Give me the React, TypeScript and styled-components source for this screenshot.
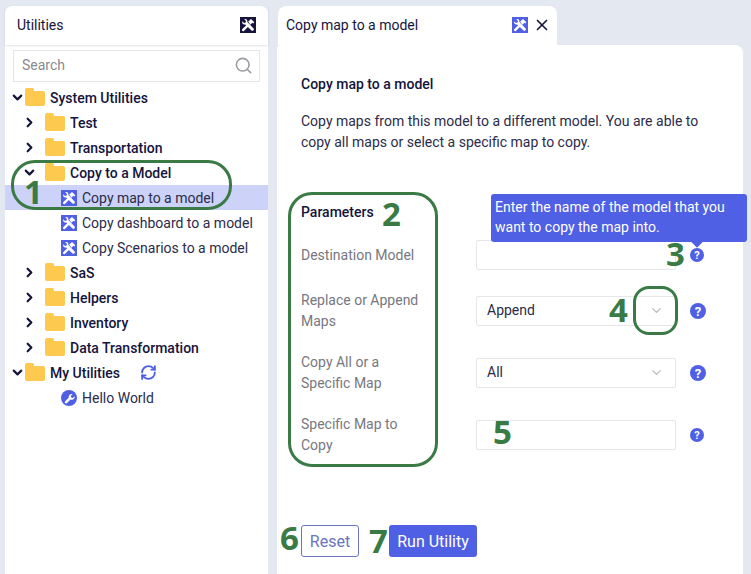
import * as React from "react";
import styled, { createGlobalStyle } from "styled-components";
import { ChevronDown, ChevronRight, RefreshCw, Search, X } from "lucide-react";

const Colors = {
    page: "#e4e8f1",
    navy: "#14143c",
    text: "#2b2b4a",
    grey: "#77777f",
    border: "#e4e6ea",
    indigo: "#5060e4",
    selected: "#cdd3f8",
    folder: "#fdc94f",
    green: "#3a7a44"
};

const GlobalStyle = createGlobalStyle`
    html, body {
        margin: 0;
        padding: 0;
        background: ${Colors.page};
    }
    body {
        font-family: Roboto, "Liberation Sans", sans-serif;
        color: ${Colors.navy};
    }
`;

const Page = styled.div`
    width: 751px;
    height: 574px;
    position: relative;
    overflow: hidden;
    display: flex;
    gap: 9px;
    padding: 6px 8px 0 5px;
    box-sizing: border-box;
`;

const LeftPanel = styled.div`
    width: 263px;
    flex-shrink: 0;
    background: #fff;
    border-radius: 8px 8px 0 0;
    display: flex;
    flex-direction: column;
`;

const PanelHeader = styled.div`
    height: 39px;
    flex-shrink: 0;
    display: flex;
    align-items: center;
    justify-content: space-between;
    padding: 0 12px 1px;
    box-sizing: border-box;
    font-size: 14px;
    box-shadow: 0 1px 2px rgba(40, 50, 90, 0.14);
`;

const SearchBox = styled.div`
    height: 32px;
    margin: 5px 8px 0;
    border: 1px solid ${Colors.border};
    box-sizing: border-box;
    display: flex;
    align-items: center;
    justify-content: space-between;
    padding: 0 6px 2px 8px;
    font-size: 14px;
    color: #8a8a92;
`;

const Tree = styled.div`
    margin-top: 3px;
    display: flex;
    flex-direction: column;
`;

const TreeRow = styled.div<{ $depth: number; $selected?: boolean }>`
    height: 25px;
    display: flex;
    align-items: center;
    padding-left: ${(p) => p.$depth}px;
    font-size: 14px;
    background: ${(p) => (p.$selected ? Colors.selected : "transparent")};
`;

const FolderLabel = styled.span`
    font-weight: 500;
`;

const Toggle = styled.span<{ $width: number }>`
    width: ${(p) => p.$width}px;
    display: flex;
    justify-content: center;
    color: ${Colors.navy};
`;

const Folder = styled.span`
    width: 20px;
    height: 15px;
    margin: 2px 5px 0 0;
    background: ${Colors.folder};
    border-radius: 1px 2px 2px 2px;
    position: relative;
    &::before {
        content: "";
        position: absolute;
        left: 0;
        top: -3px;
        width: 9px;
        height: 4px;
        background: ${Colors.folder};
        border-radius: 2px 2px 0 0;
    }
`;

const LeafLabel = styled.span`
    margin-left: 5px;
    color: ${Colors.text};
`;

const RefreshButton = styled.span`
    margin-left: 20px;
    display: flex;
    color: ${Colors.indigo};
`;

const RightColumn = styled.div`
    flex: 1;
    display: flex;
    flex-direction: column;
    min-width: 0;
`;

const Tab = styled.div`
    width: 279px;
    height: 39px;
    margin-left: 1px;
    flex-shrink: 0;
    background: #fff;
    border-radius: 8px 8px 0 0;
    display: flex;
    align-items: center;
    justify-content: space-between;
    padding: 0 6px 1px 8px;
    box-sizing: border-box;
    font-size: 14px;
`;

const TabActions = styled.div`
    display: flex;
    align-items: center;
    gap: 5px;
`;

const Content = styled.div`
    flex: 1;
    background: #fff;
    border-radius: 4px 8px 0 0;
    padding: 30px 24px 0;
    position: relative;
`;

const Title = styled.div`
    font-size: 14px;
    font-weight: 500;
    line-height: 18px;
`;

const Description = styled.p`
    margin: 18px 0 0;
    width: 420px;
    font-size: 14px;
    line-height: 21px;
    color: ${Colors.text};
`;

const FormGrid = styled.div`
    margin-top: 51px;
    display: grid;
    grid-template-columns: 175px 200px 30px;
    row-gap: 20px;
    align-items: center;
`;

const SectionLabel = styled.div`
    grid-column: 1 / -1;
    font-size: 14px;
    font-weight: 500;
    height: 16px;
    line-height: 17px;
`;

const FieldLabel = styled.div`
    font-size: 14px;
    line-height: 21px;
    color: ${Colors.grey};
    width: 130px;
`;

const Control = styled.div`
    height: 30px;
    border: 1px solid ${Colors.border};
    border-radius: 2px;
    box-sizing: border-box;
    display: flex;
    align-items: center;
    justify-content: space-between;
    padding: 0 11px 2px 10px;
    font-size: 14px;
    color: ${Colors.text};
`;

const HelpDot = styled.span<{ $size: number }>`
    width: ${(p) => p.$size}px;
    height: ${(p) => p.$size}px;
    margin-left: 14px;
    border-radius: 50%;
    background: ${Colors.indigo};
    color: #fff;
    font-size: ${(p) => p.$size - 3}px;
    font-weight: 700;
    display: flex;
    align-items: center;
    justify-content: center;
`;

const Buttons = styled.div`
    margin-top: 69px;
    display: flex;
    gap: 30px;
`;

const ResetButton = styled.div`
    width: 58px;
    height: 32px;
    box-sizing: border-box;
    border: 1px solid #6a74c0;
    border-radius: 3px;
    color: #6a74c0;
    font-size: 16px;
    display: flex;
    align-items: center;
    justify-content: center;
`;

const RunButton = styled.div`
    width: 88px;
    height: 32px;
    background: ${Colors.indigo};
    border-radius: 3px;
    color: #fff;
    font-size: 16px;
    display: flex;
    align-items: center;
    justify-content: center;
`;

const Tooltip = styled.div`
    position: absolute;
    left: 491px;
    top: 194px;
    width: 256px;
    height: 48px;
    box-sizing: border-box;
    padding: 3px 4px;
    background: ${Colors.indigo};
    border-radius: 3px;
    color: #fff;
    font-size: 14px;
    line-height: 20px;
    &::after {
        content: "";
        position: absolute;
        left: 202px;
        bottom: -4px;
        width: 8px;
        height: 8px;
        background: ${Colors.indigo};
        transform: rotate(45deg);
    }
`;

const Callout = styled.div<{ $x: number; $y: number; $w: number; $h: number; $r: number }>`
    position: absolute;
    left: ${(p) => p.$x}px;
    top: ${(p) => p.$y}px;
    width: ${(p) => p.$w}px;
    height: ${(p) => p.$h}px;
    border: 3px solid ${Colors.green};
    border-radius: ${(p) => p.$r}px;
    box-sizing: border-box;
`;

const Step = styled.div<{ $x: number; $y: number }>`
    position: absolute;
    left: ${(p) => p.$x}px;
    top: ${(p) => p.$y}px;
    color: ${Colors.green};
    font-family: "Open Sans", "Liberation Sans", sans-serif;
    font-size: 33px;
    line-height: 36px;
    font-weight: 700;
`;

// hammer head top right, open wrench top left, handles crossing
const ToolsIcon = ({ bg }: { bg: string }) => (
    <svg width="16" height="16" viewBox="0 0 16 16" style={{ flexShrink: 0 }}>
        <rect width="16" height="16" fill={bg} />
        <path
            d="M2.2 4.3 L4 6 L5.6 5.4 L6 3.9 L4.3 2.2 C6 1.6 7.8 2.9 7.4 5 L13.6 11.4 C14.2 12 13.9 12.8 13.4 13.3 C12.8 13.9 12.1 14 11.5 13.5 L5.2 7.4 C3.2 8 1.6 6.2 2.2 4.3 Z"
            fill="#fff"
        />
        <path d="M2.2 12.2 L8 6.6 L9.6 8.2 L3.9 13.9 C3.4 14.3 2.7 14.2 2.2 13.8 C1.8 13.3 1.8 12.7 2.2 12.2 Z" fill="#fff" />
        <path d="M8.2 4.6 L11 2 L14.3 5.3 L13.2 6.4 L12.4 5.8 L10.4 7.8 Z" fill="#fff" />
    </svg>
);

const WrenchBadge = () => (
    <svg width="16" height="16" viewBox="0 0 16 16" style={{ flexShrink: 0 }}>
        <circle cx="8" cy="8" r="8" fill={Colors.indigo} />
        <path d="M3.8 11.8 L7.8 7.6 C7.2 5.6 9 3.4 11.6 4 L9.8 6 L10.2 7.6 L11.9 8 L13.6 6.2 C14 8.8 11.8 10.4 9.6 9.6 L5.4 13.4 C4.4 13.6 3.6 12.8 3.8 11.8 Z" fill="#fff" />
    </svg>
);

type Node = {
    label: string;
    kind: "root" | "folder" | "tool" | "script";
    open?: boolean;
    selected?: boolean;
    refresh?: boolean;
};

const nodes: Node[] = [
    { label: "System Utilities", kind: "root", open: true },
    { label: "Test", kind: "folder" },
    { label: "Transportation", kind: "folder" },
    { label: "Copy to a Model", kind: "folder", open: true },
    { label: "Copy map to a model", kind: "tool", selected: true },
    { label: "Copy dashboard to a model", kind: "tool" },
    { label: "Copy Scenarios to a model", kind: "tool" },
    { label: "SaS", kind: "folder" },
    { label: "Helpers", kind: "folder" },
    { label: "Inventory", kind: "folder" },
    { label: "Data Transformation", kind: "folder" },
    { label: "My Utilities", kind: "root", open: true, refresh: true },
    { label: "Hello World", kind: "script" }
];

const TreeNode = ({ node }: { node: Node }) => {
    if (node.kind === "tool" || node.kind === "script") {
        return (
            <TreeRow $depth={56} $selected={node.selected}>
                {node.kind === "tool" ? <ToolsIcon bg={Colors.indigo} /> : <WrenchBadge />}
                <LeafLabel>{node.label}</LeafLabel>
            </TreeRow>
        );
    }
    const root = node.kind === "root";
    return (
        <TreeRow $depth={root ? 4 : 8}>
            <Toggle $width={root ? 16 : 32}>
                {node.open ? (
                    <ChevronDown size={15} strokeWidth={3.4} />
                ) : (
                    <ChevronRight size={15} strokeWidth={3.4} />
                )}
            </Toggle>
            <Folder />
            <FolderLabel>{node.label}</FolderLabel>
            {node.refresh && (
                <RefreshButton>
                    <RefreshCw size={17} strokeWidth={2.6} />
                </RefreshButton>
            )}
        </TreeRow>
    );
};

const fields = [
    { label: "Destination Model", value: "", help: 14 },
    { label: "Replace or Append Maps", value: "Append", select: true, help: 16 },
    { label: "Copy All or a Specific Map", value: "All", select: true, help: 16 },
    { label: "Specific Map to Copy", value: "", help: 14 }
];

export default function App() {
    return (
        <Page>
            <GlobalStyle />
            <LeftPanel>
                <PanelHeader>
                    Utilities
                    <ToolsIcon bg={Colors.navy} />
                </PanelHeader>
                <SearchBox>
                    Search
                    <Search size={19} strokeWidth={2} color="#9a9aa2" />
                </SearchBox>
                <Tree>
                    {nodes.map((node) => (
                        <TreeNode key={node.label} node={node} />
                    ))}
                </Tree>
            </LeftPanel>
            <RightColumn>
                <Tab>
                    Copy map to a model
                    <TabActions>
                        <ToolsIcon bg={Colors.indigo} />
                        <X size={18} strokeWidth={2.2} />
                    </TabActions>
                </Tab>
                <Content>
                    <Title>Copy map to a model</Title>
                    <Description>
                        Copy maps from this model to a different model. You are able to copy
                        all maps or select a specific map to copy.
                    </Description>
                    <FormGrid>
                        <SectionLabel>Parameters</SectionLabel>
                        {fields.map((field) => (
                            <React.Fragment key={field.label}>
                                <FieldLabel>{field.label}</FieldLabel>
                                <Control>
                                    {field.value}
                                    {field.select && <ChevronDown size={15} color="#b8b8be" />}
                                </Control>
                                <HelpDot $size={field.help}>?</HelpDot>
                            </React.Fragment>
                        ))}
                    </FormGrid>
                    <Buttons>
                        <ResetButton>Reset</ResetButton>
                        <RunButton>Run Utility</RunButton>
                    </Buttons>
                </Content>
            </RightColumn>
            <Tooltip>Enter the name of the model that you want to copy the map into.</Tooltip>
            <Callout $x={11} $y={160} $w={221} $h={50} $r={24} />
            <Callout $x={288} $y={192} $w={150} $h={275} $r={24} />
            <Callout $x={633} $y={286} $w={45} $h={49} $r={16} />
            <Step $x={24} $y={174}>1</Step>
            <Step $x={382} $y={196}>2</Step>
            <Step $x={666} $y={236}>3</Step>
            <Step $x={609} $y={292}>4</Step>
            <Step $x={493} $y={414}>5</Step>
            <Step $x={280} $y={520}>6</Step>
            <Step $x={369} $y={523}>7</Step>
        </Page>
    );
}
